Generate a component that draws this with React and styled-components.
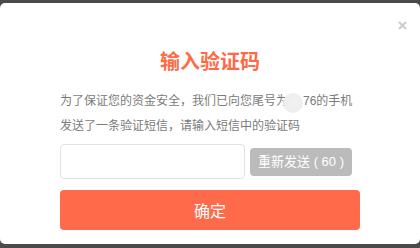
import React from "react";
import styled, { createGlobalStyle } from "styled-components";

const Global = createGlobalStyle`
  html, body { margin: 0; padding: 0; }
  body {
    background: #4b4b4b;
    width: 420px;
    height: 248px;
    overflow: hidden;
    font-family: "Liberation Sans", "Noto Sans CJK SC", sans-serif;
  }
`;

const Backdrop = styled.div`
  width: 420px;
  height: 248px;
  padding-top: 3px;
  box-sizing: border-box;
`;

const Dialog = styled.div`
  position: relative;
  width: 420px;
  height: 241px;
  background: #ffffff;
  border-radius: 5px;
  box-sizing: border-box;
  padding: 48px 60px 0 60px;
  display: flex;
  flex-direction: column;
`;

const Close = styled.button`
  position: absolute;
  top: 15px;
  right: 11px;
  width: 14px;
  height: 14px;
  padding: 0;
  border: 0;
  background: transparent;
  display: flex;
  align-items: center;
  justify-content: center;
  cursor: pointer;
`;

const Title = styled.h2`
  margin: 0;
  font-size: 20px;
  line-height: 20px;
  font-weight: bold;
  color: #ff6a45;
  text-align: center;
  font-family: "Noto Sans CJK SC", sans-serif;
`;

const Message = styled.p`
  margin: 18px 0 0 0;
  font-size: 12px;
  line-height: 25px;
  color: #7b7b7b;
  white-space: nowrap;
`;

const Redact = styled.span`
  position: relative;
  display: inline-block;
  width: 15px;
  height: 12px;
  vertical-align: middle;
  &::after {
    content: "";
    position: absolute;
    left: -5px;
    top: -3px;
    width: 20px;
    height: 20px;
    border-radius: 50%;
    background: radial-gradient(circle at 50% 50%, #f2f2f2 0%, #eeeeee 60%, #f1f1f1 100%);
    filter: blur(0.5px);
  }
`;

const CodeRow = styled.div`
  margin-top: 5px;
  display: flex;
  align-items: center;
  gap: 5px;
`;

const CodeInput = styled.input`
  width: 185px;
  height: 35px;
  box-sizing: border-box;
  border: 1px solid #e2e2e2;
  border-radius: 4px;
  outline: none;
  padding: 0 10px;
  font-size: 14px;
  font-family: inherit;
`;

const Resend = styled.button`
  width: 102px;
  height: 28px;
  border: 0;
  border-radius: 4px;
  background: #bbbbbb;
  color: #ffffff;
  font-size: 13px;
  font-family: "Liberation Sans", "Noto Sans CJK SC", sans-serif;
  padding: 0;
  line-height: 28px;
  white-space: nowrap;
`;

const Confirm = styled.button`
  margin-top: 11px;
  width: 300px;
  height: 40px;
  border: 0;
  border-radius: 4px;
  background: #ff6b4a;
  color: #ffffff;
  font-size: 16px;
  font-family: "Noto Sans CJK SC", sans-serif;
  padding: 0;
  line-height: 40px;
`;

export default function App() {
  return (
    <>
      <Global />
      <Backdrop>
        <Dialog>
          <Close aria-label="关闭">
            <svg width="9" height="9" viewBox="0 0 9 9">
              <path d="M1 1 L8 8 M8 1 L1 8" stroke="#cccccc" strokeWidth="2" strokeLinecap="butt" />
            </svg>
          </Close>
          <Title>输入验证码</Title>
          <Message>
            为了保证您的资金安全，我们已向您尾号为<Redact />76的手机
            <br />
            发送了一条验证短信，请输入短信中的验证码
          </Message>
          <CodeRow>
            <CodeInput />
            <Resend>重新发送 ( 60 )</Resend>
          </CodeRow>
          <Confirm>确定</Confirm>
        </Dialog>
      </Backdrop>
    </>
  );
}
